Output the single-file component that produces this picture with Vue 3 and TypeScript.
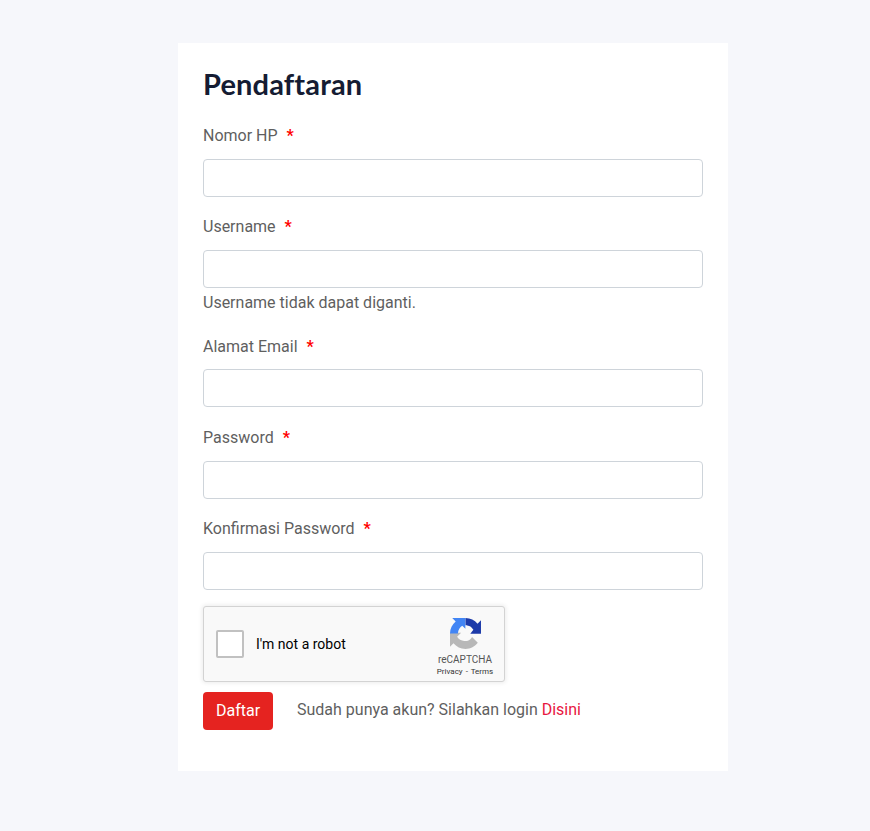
<script setup lang="ts">
interface Field {
  label: string
  hint?: string
}
const fields: Field[] = [
  { label: 'Nomor HP' },
  { label: 'Username', hint: 'Username tidak dapat diganti.' },
  { label: 'Alamat Email' },
  { label: 'Password' },
  { label: 'Konfirmasi Password' },
]
</script>

<template>
  <main class="page">
    <form class="card" @submit.prevent>
      <h1 class="title">Pendaftaran</h1>
      <div v-for="f in fields" :key="f.label" class="group">
        <label class="label">{{ f.label }}<span class="req">*</span></label>
        <input class="input" type="text" />
        <div v-if="f.hint" class="hint">{{ f.hint }}</div>
      </div>
      <div class="captcha">
        <span class="check"></span>
        <span class="robot">I'm not a robot</span>
        <div class="brand">
          <svg class="logo" viewBox="0 0 64 64" width="31" height="31">
            <path fill="#b8b8b8" d="M0 31.952l.033 1.37v25.9l7.16-7.16c5.858 7.173 14.774 11.754 24.757 11.754 10.4 0 19.622-4.96 25.458-12.64l-11.86-11.736c-1.15 2.127-2.784 3.955-4.77 5.33-2.048 1.6-4.95 2.906-9.952 2.906-.604 0-1.07-.07-1.414-.202-6.2-.49-11.573-3.91-14.74-8.87l8.307-8.308c-10.522.04-22.41.066-24.1.04z" />
            <path fill="#4285f4" d="M31.862 0l-1.37.033H4.592l7.16 7.16C4.578 13.052 0 21.967 0 31.95c0 .01 16.264.01 16.264.01 0-.604.07-1.07.202-1.414.49-6.2 3.91-11.573 8.87-14.74l6.486 6.487c-.04-10.522-.01-22.293.04-22.293z" />
            <path fill="#1c3aa9" d="M64 31.955l-.033-1.37V4.687l-7.16 7.16C50.948 4.674 42.033.093 32.05.093V15.094c.604 0 3.07.07 3.414.202 6.2.49 9.573 3.91 12.74 8.87l-6.307 8.308c10.522-.04 20.41-.066 22.1-.04z" />
          </svg>
          <span class="brand-name">reCAPTCHA</span>
          <span class="brand-links">Privacy - Terms</span>
        </div>
      </div>
      <div class="actions">
        <button class="submit" type="submit">Daftar</button>
        <span class="login">Sudah punya akun? Silahkan login <a class="link" href="#">Disini</a></span>
      </div>
    </form>
  </main>
</template>

<style scoped>
.page {
  min-height: 831px;
  box-sizing: border-box;
  padding: 43px 142px 60px 178px;
  background: #f6f7fb;
  font-family: Roboto, "Liberation Sans", sans-serif;
  font-size: 16px;
  line-height: 24px;
  color: #5f5f5f;
}
.card {
  box-sizing: border-box;
  width: 550px;
  height: 728px;
  padding: 25px;
  background: #fff;
}
.title {
  margin: 0 0 24.2px;
  font-family: Lato, "Noto Sans", sans-serif;
  font-size: 29px;
  line-height: 32px;
  font-weight: 700;
  letter-spacing: 0.15px;
  color: #151c33;
}
.group + .group {
  margin-top: 18.4px;
}
.label {
  display: block;
  margin-bottom: 10.8px;
}
.req {
  margin-left: 9px;
  color: #f00;
  font-weight: 700;
}
.input {
  display: block;
  box-sizing: border-box;
  width: 100%;
  height: 38px;
  padding: 6px 12px;
  background: #fff;
  border: 1px solid #ced4da;
  border-radius: 4px;
  outline: none;
}
.hint {
  padding-top: 3px;
  padding-bottom: 1px;
}
.captcha {
  box-sizing: border-box;
  display: flex;
  align-items: center;
  width: 302px;
  height: 76px;
  margin-top: 16.2px;
  padding: 0 10px 0 12px;
  background: #f9f9f9;
  border: 1px solid #d3d3d3;
  border-radius: 3px;
  box-shadow: 0 0 4px 1px rgba(0, 0, 0, 0.08);
  color: #000;
}
.check {
  box-sizing: border-box;
  width: 28px;
  height: 28px;
  background: #fff;
  border: 2px solid #c1c1c1;
  border-radius: 2px;
}
.robot {
  margin-left: 12px;
  font-size: 14px;
}
.brand {
  display: flex;
  flex-direction: column;
  align-items: center;
  margin-left: auto;
  margin-top: 8px;
  width: 58px;
  color: #555;
}
.logo {
  margin-bottom: 4px;
}
.brand-name {
  font-size: 10px;
  line-height: 13px;
}
.brand-links {
  font-size: 8px;
  line-height: 11px;
  word-spacing: 1px;
  white-space: nowrap;
  color: #333;
}
.actions {
  display: flex;
  align-items: center;
  margin-top: 10px;
}
.submit {
  width: 70px;
  height: 38px;
  padding: 0;
  background: #e52320;
  border: 0;
  border-radius: 4px;
  color: #fff;
  font: inherit;
}
.login {
  margin-left: 24px;
  margin-top: -2px;
}
.link {
  color: #e8173f;
  text-decoration: none;
}
</style>
